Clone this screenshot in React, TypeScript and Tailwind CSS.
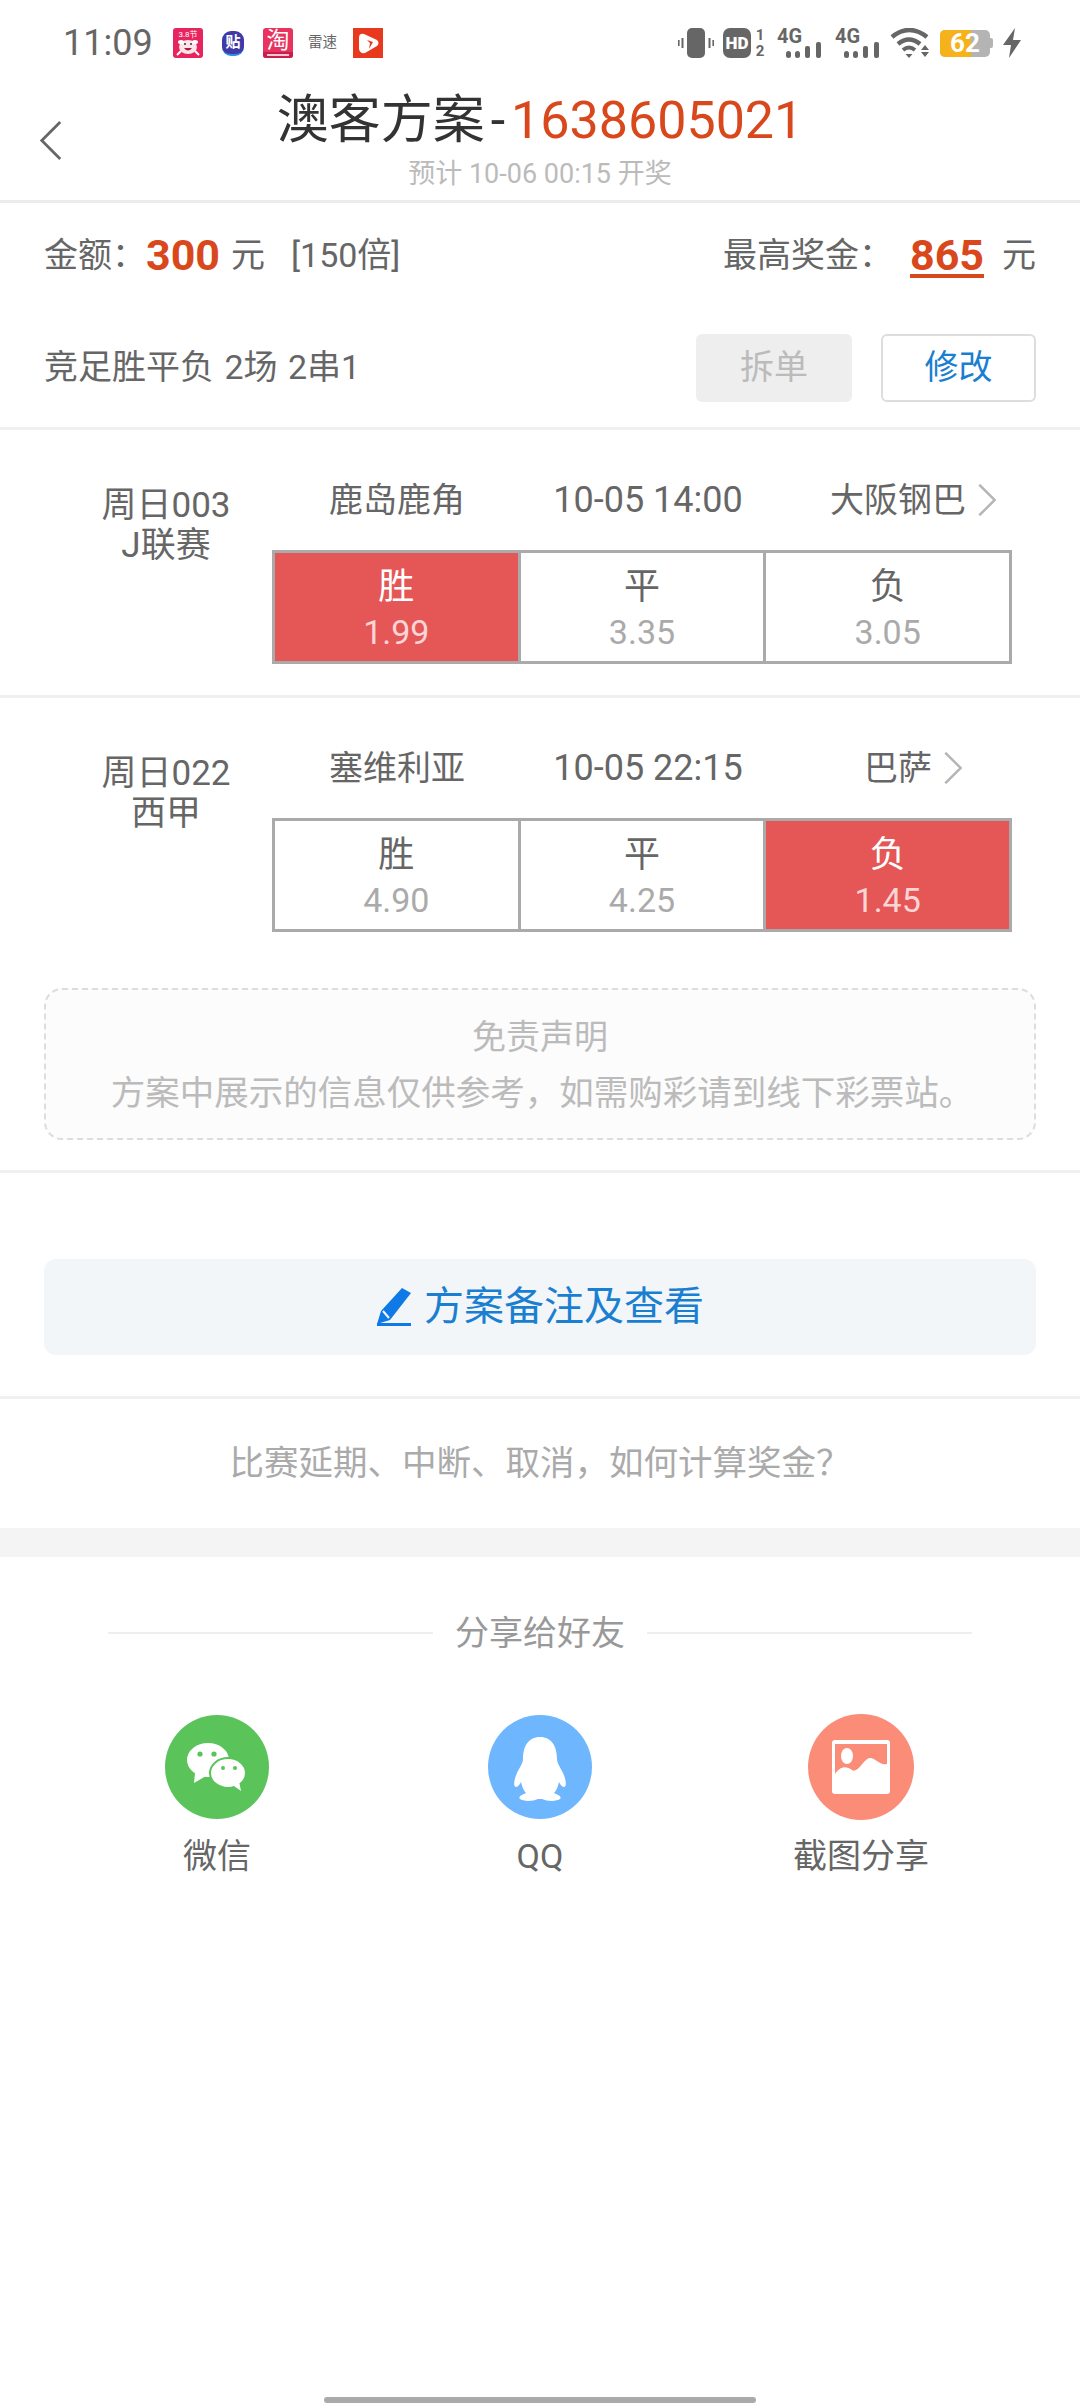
import React from "react";

const cjk = "font-['Roboto','Noto_Sans_CJK_SC',sans-serif]";

function Chevron({ className }: { className: string }) {
  return (
    <svg viewBox="0 0 20 40" preserveAspectRatio="none" className={className} fill="none" stroke="#b5b5b5" strokeWidth="2.4">
      <path d="M3 3 L17 20 L3 37" />
    </svg>
  );
}

function AppIcons() {
  return (
    <div className="flex items-center">
      <svg viewBox="0 0 30 30" className="w-[30px] h-[30px]">
        <rect width="30" height="30" rx="3" fill="#e8245f" />
        <ellipse cx="15" cy="19" rx="9" ry="7" fill="#fbe4ea" />
        <ellipse cx="8" cy="14" rx="3" ry="2" fill="#fff" />
        <ellipse cx="22" cy="14" rx="3" ry="2" fill="#fff" />
        <circle cx="12" cy="16" r="1" fill="#333" />
        <circle cx="18" cy="16" r="1" fill="#333" />
        <path d="M11 20 Q15 25 19 20Z" fill="#b3173a" />
        <path d="M4 27 L8 23 M26 27 L22 23" stroke="#fff" strokeWidth="2" />
        <text x="15" y="9" textAnchor="middle" fontSize="8" fill="#fff">3.8节</text>
      </svg>
      <div className="w-[22px] h-[25px] ml-[19px] rounded-[9px] bg-[#3f3aa8] border-b-2 border-[#2f8de0] flex items-center justify-center text-[15px] leading-none text-white font-bold">贴</div>
      <div className="relative w-[30px] h-[30px] ml-[19px] rounded-[3px] bg-[#e8325f] overflow-hidden flex justify-center">
        <span className="text-[23px] leading-[25px] text-white">淘</span>
        <div className="absolute left-0 right-0 bottom-0 h-[6px] bg-[#c81e4c]" />
        <div className="absolute left-[4px] right-[4px] bottom-[2px] h-[2px] bg-[#f6c6d2]" />
      </div>
      <span className="w-[29px] ml-[15px] text-[14.5px] leading-none whitespace-nowrap text-[#666]">雷速</span>
      <svg viewBox="0 0 30 30" className="w-[30px] h-[30px] ml-[16px]">
        <rect width="30" height="30" fill="#e8391f" />
        <path d="M6 10 Q6 5 11 6 L24 12 Q27 15 24 18 L12 25 Q7 26 6 21Z" fill="#fff" />
        <path d="M14 12 L20 14 L16 21 L17 15Z" fill="#e8391f" />
      </svg>
    </div>
  );
}

function StatusIcons() {
  return (
    <div className="flex items-center text-[#666] h-[30px] font-['Roboto',sans-serif]">
      <svg viewBox="0 0 36 30" className="w-[36px] h-[30px]">
        <rect x="9" y="0" width="18" height="30" rx="5" fill="#666" />
        <rect x="3.5" y="10" width="2" height="10" fill="#666" />
        <rect x="0" y="12" width="1.6" height="6" fill="#666" />
        <rect x="30.5" y="10" width="2" height="10" fill="#666" />
        <rect x="34.4" y="12" width="1.6" height="6" fill="#666" />
      </svg>
      <div className="ml-[9px] w-[28px] h-[30px] rounded-[7px] bg-[#666] flex items-center justify-center text-[17px] leading-none font-black text-white">HD</div>
      <div className="ml-[3px] w-[12px] flex flex-col text-[15px] leading-[16px] font-bold items-center">
        <span>1</span>
        <span>2</span>
      </div>
      {[0, 1].map((i) => (
        <div key={i} className={`relative w-[44px] h-[30px] ${i === 0 ? "ml-[11px]" : "ml-[14px]"}`}>
          <span className="absolute left-0 top-[-2px] text-[20px] leading-[20px] font-bold">4G</span>
          <svg viewBox="0 0 35 16" className="absolute right-0 bottom-0 w-[35px] h-[16px]">
            <rect x="0" y="9" width="5" height="7" rx="2.5" fill="#666" />
            <rect x="9" y="9" width="5" height="7" rx="2.5" fill="#666" />
            <rect x="19" y="4" width="5" height="12" rx="2" fill="#666" />
            <rect x="30" y="0" width="5" height="16" rx="2" fill="#666" />
          </svg>
        </div>
      ))}
      <svg viewBox="0 0 40 30" className="ml-[11px] w-[40px] h-[30px]">
        <path d="M2 9 Q19 -5 37 9" stroke="#666" strokeWidth="4.5" fill="none" />
        <path d="M8 16 Q19 7 30 16" stroke="#666" strokeWidth="4.5" fill="none" />
        <path d="M13 22 Q19 17 25 22" stroke="#666" strokeWidth="4" fill="none" />
        <path d="M15.5 26 h7 l-3.5 4Z" fill="#666" />
        <path d="M35 17 l4 5 h-8Z M31 24 h8 l-4 5Z" fill="#666" />
      </svg>
      <div className="ml-[10px] flex items-center">
        <div className="relative w-[50px] h-[27px] rounded-[5px] bg-[#b4b4b4] overflow-hidden">
          <div className="w-[31px] h-full bg-[#f6b21a]" />
          <span className="absolute inset-0 flex items-center justify-center text-[26px] leading-none font-bold text-white">62</span>
        </div>
        <div className="w-[3px] h-[10px] rounded-r-[2px] bg-[#b4b4b4]" />
      </div>
      <svg viewBox="0 0 18 30" className="ml-[10px] w-[18px] h-[30px]">
        <path d="M12 0 L0 17 H8 L6 30 L18 12 H10Z" fill="#666" />
      </svg>
    </div>
  );
}

function Odds({ name, value, active }: { name: string; value: string; active: boolean }) {
  return (
    <div className={`flex-1 flex flex-col items-center pt-[12px] ${active ? "bg-[#e55757]" : "bg-white"}`}>
      <span className={`text-[36px] leading-[44px] ${active ? "text-white" : "text-[#666]"}`}>{name}</span>
      <span className={`mt-[4px] text-[34px] leading-[38px] ${active ? "text-[#fbd5d5]" : "text-[#aaa]"}`}>{value}</span>
    </div>
  );
}

const matches = [
  {
    no: "周日003",
    league: "J联赛",
    home: "鹿岛鹿角",
    time: "10-05 14:00",
    away: "大阪钢巴",
    odds: [
      { name: "胜", value: "1.99", active: true },
      { name: "平", value: "3.35", active: false },
      { name: "负", value: "3.05", active: false },
    ],
  },
  {
    no: "周日022",
    league: "西甲",
    home: "塞维利亚",
    time: "10-05 22:15",
    away: "巴萨",
    odds: [
      { name: "胜", value: "4.90", active: false },
      { name: "平", value: "4.25", active: false },
      { name: "负", value: "1.45", active: true },
    ],
  },
];

function Match({ m, last }: { m: (typeof matches)[number]; last: boolean }) {
  return (
    <div className={`flex pt-[47px] ${last ? "h-[265px]" : "h-[268px] border-b-[3px] border-[#f0f0f0]"}`}>
      <div className="w-[272px] pl-[60px] pt-[9px] text-center text-[35px] leading-[40px] text-[#666]">
        <div>{m.no}</div>
        <div>{m.league}</div>
      </div>
      <div className="w-[740px]">
        <div className="flex h-[46px] items-center text-[34px] text-[#666] whitespace-nowrap">
          <div className="w-[250px] text-center">{m.home}</div>
          <div className="w-[252px] text-center text-[36px]">{m.time}</div>
          <div className="w-[238px] pl-[42px] flex items-center justify-center">
            <span>{m.away}</span>
            <Chevron className="w-[22px] h-[36px] ml-[10px]" />
          </div>
        </div>
        <div className="mt-[27px] h-[114px] flex border-[3px] border-[#aaa] divide-x-[3px] divide-[#aaa]">
          {m.odds.map((o) => (
            <Odds key={o.name} {...o} />
          ))}
        </div>
      </div>
    </div>
  );
}

function Share({ label, children }: { label: string; children: React.ReactNode }) {
  return (
    <div className="flex flex-col items-center">
      <div className="h-[106px] flex items-center">{children}</div>
      <span className="mt-[15px] text-[34px] leading-[42px] text-[#666]">{label}</span>
    </div>
  );
}

export default function App() {
  return (
    <div className={`${cjk} w-[1080px] h-[2408px] bg-white flex flex-col overflow-hidden`}>
      <div className="h-[70px] pt-[28px] pl-[63px] pr-[59px] flex items-start justify-between">
        <div className="flex items-center h-[30px]">
          <span className="w-[110px] text-[36px] leading-none text-[#666]">11:09</span>
          <AppIcons />
        </div>
        <StatusIcons />
      </div>

      <div className="relative h-[133px] border-b-[3px] border-[#ececec] flex flex-col items-center">
        <svg viewBox="0 0 26 44" className="absolute left-[39px] top-[50px] w-[24px] h-[41px]" fill="none" stroke="#666" strokeWidth="3">
          <path d="M23 2 L3 22 L23 42" />
        </svg>
        <div className="mt-[15px] h-[72px] flex items-center text-[52px] leading-none text-[#333] whitespace-nowrap">
          澳客方案<span className="ml-[6px] mr-[6px]">-</span><span className="text-[#d9481c]">1638605021</span>
        </div>
        <div className="mt-[2px] text-[27px] leading-[30px] text-[#bbb]">预计 10-06 00:15 开奖</div>
      </div>

      <div className="h-[104px] px-[44px] flex items-center justify-between text-[34px] text-[#666]">
        <div className="flex items-center">
          <span>金额：</span>
          <span className="ml-[0px] text-[43px] font-bold text-[#d9481c]">300</span>
          <span className="ml-[11px]">元</span>
          <span className="ml-[26px]">[150倍]</span>
        </div>
        <div className="flex items-center">
          <span>最高奖金：</span>
          <span className="ml-[17px] text-[43px] font-bold text-[#d9481c] underline underline-offset-[4px] decoration-[4px]">865</span>
          <span className="ml-[18px]">元</span>
        </div>
      </div>

      <div className="h-[123px] pt-[1px] px-[44px] flex items-center justify-between border-b-[3px] border-[#f0f0f0]">
        <span className="text-[34px] text-[#666] [word-spacing:2px]">竞足胜平负 2场 2串1</span>
        <div className="flex gap-[29px]">
          <div className="w-[156px] h-[68px] rounded-[6px] bg-[#eeeeee] flex items-center justify-center text-[34px] text-[#bbb]">拆单</div>
          <div className="w-[155px] h-[68px] rounded-[6px] border-[2px] border-[#dddddd] flex items-center justify-center text-[34px] text-[#1a7fd0]">修改</div>
        </div>
      </div>

      {matches.map((m, i) => (
        <Match key={m.no} m={m} last={i === matches.length - 1} />
      ))}

      <div className="h-[210px] border-b-[3px] border-[#f0f0f0] px-[44px] pt-[25px]">
        <div className="h-[152px] rounded-[18px] border-[2px] border-dashed border-[#dddddd] bg-[#fcfcfc] flex flex-col items-center pt-[23px] text-[#bbb]">
          <span className="text-[34px] leading-[48px]">免责声明</span>
          <span className="mt-[8px] pl-[4px] text-[34.5px] leading-[48px] whitespace-nowrap">方案中展示的信息仅供参考，如需购彩请到线下彩票站。</span>
        </div>
      </div>

      <div className="h-[226px] border-b-[3px] border-[#f0f0f0] px-[44px] pt-[86px]">
        <div className="h-[96px] rounded-[12px] bg-[#f2f6f9] flex items-center justify-center text-[40px] text-[#1a7fd0]">
          <svg viewBox="0 0 36 38" className="w-[36px] h-[38px] mr-[12px]">
            <path d="M26 0 L35 5 L14 32 L1 36 L5 23Z" fill="#0f7ae5" />
            <path d="M7 23 L13 30" stroke="#f2f6f9" strokeWidth="2" />
            <rect x="1" y="35" width="34" height="3" fill="#0f7ae5" />
          </svg>
          方案备注及查看
        </div>
      </div>

      <div className="h-[129px] flex items-center justify-center text-[34.5px] text-[#aaa]">比赛延期、中断、取消，如何计算奖金？</div>

      <div className="h-[29px] bg-[#f4f4f4]" />

      <div className="mt-[59px] h-[34px] px-[108px] flex items-center">
        <div className="flex-1 h-[2px] bg-[#eeeeee]" />
        <span className="mx-[22px] text-[34px] leading-none text-[#999]">分享给好友</span>
        <div className="flex-1 h-[2px] bg-[#eeeeee]" />
      </div>

      <div className="mt-[64px] pl-[57px] grid grid-cols-[320px_326px_316px]">
        <Share label="微信">
          <svg viewBox="0 0 104 104" className="w-[104px] h-[104px]">
            <circle cx="52" cy="52" r="52" fill="#5ac35a" />
            <ellipse cx="43" cy="45" rx="21" ry="17" fill="#fff" />
            <path d="M30 58 L29 68 L41 61Z" fill="#fff" />
            <circle cx="35" cy="39" r="2.6" fill="#5ac35a" />
            <circle cx="49" cy="39" r="2.6" fill="#5ac35a" />
            <ellipse cx="63" cy="58" rx="18" ry="15" fill="#fff" stroke="#5ac35a" strokeWidth="2" />
            <path d="M69 71 L76 76 L74 66Z" fill="#fff" />
            <circle cx="58" cy="53" r="2" fill="#5ac35a" />
            <circle cx="70" cy="53" r="2" fill="#5ac35a" />
          </svg>
        </Share>
        <Share label="QQ">
          <svg viewBox="0 0 104 104" className="w-[104px] h-[104px]">
            <circle cx="52" cy="52" r="52" fill="#6eb6fd" />
            <path d="M52 22 C64 22 69 32 69 44 C69 48 72 52 75 58 C78 64 79 72 76 72 C74 72 72 69 71 67 C70 72 68 76 66 78 C71 80 74 82 72 84 C70 86 60 87 54 84 L50 84 C44 87 34 86 32 84 C30 82 33 80 38 78 C36 76 34 72 33 67 C32 69 30 72 28 72 C25 72 26 64 29 58 C32 52 35 48 35 44 C35 32 40 22 52 22Z" fill="#fff" />
          </svg>
        </Share>
        <Share label="截图分享">
          <svg viewBox="0 0 106 106" className="w-[106px] h-[106px]">
            <circle cx="53" cy="53" r="53" fill="#fa8c78" />
            <rect x="24" y="26" width="58" height="54" rx="3" fill="#fff" />
            <rect x="27" y="30" width="52" height="44" fill="#fa8c78" />
            <path d="M27 60 C33 52 38 52 44 56 C50 60 56 44 62 44 C68 44 72 52 79 50 V75 H27Z" fill="#fff" />
            <ellipse cx="39" cy="42" rx="6" ry="8" fill="#fff" />
          </svg>
        </Share>
      </div>

      <div className="mt-auto mb-[5px] mx-auto w-[432px] h-[6px] rounded-full bg-[#aaaaaa]" />
    </div>
  );
}
